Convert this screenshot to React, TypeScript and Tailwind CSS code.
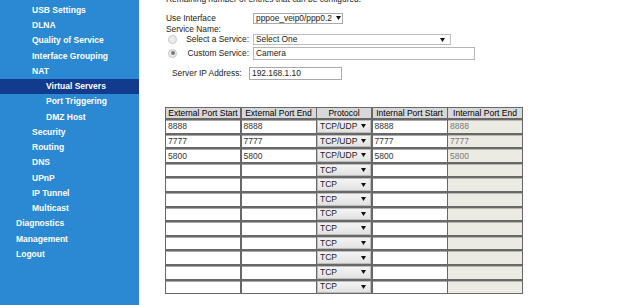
const font = { fontFamily: '"Liberation Sans", Arial, sans-serif' };

type NavItem = { label: string; level: 1 | 2 | 3; active?: boolean };

const navItems: NavItem[] = [
  { label: "USB Settings", level: 2 },
  { label: "DLNA", level: 2 },
  { label: "Quality of Service", level: 2 },
  { label: "Interface Grouping", level: 2 },
  { label: "NAT", level: 2 },
  { label: "Virtual Servers", level: 3, active: true },
  { label: "Port Triggering", level: 3 },
  { label: "DMZ Host", level: 3 },
  { label: "Security", level: 2 },
  { label: "Routing", level: 2 },
  { label: "DNS", level: 2 },
  { label: "UPnP", level: 2 },
  { label: "IP Tunnel", level: 2 },
  { label: "Multicast", level: 2 },
  { label: "Diagnostics", level: 1 },
  { label: "Management", level: 1 },
  { label: "Logout", level: 1 },
];

const indent = { 1: "pl-[16px]", 2: "pl-[32px]", 3: "pl-[46px]" };

const rows = [
  { start: "8888", end: "8888", proto: "TCP/UDP", iStart: "8888", iEnd: "8888" },
  { start: "7777", end: "7777", proto: "TCP/UDP", iStart: "7777", iEnd: "7777" },
  { start: "5800", end: "5800", proto: "TCP/UDP", iStart: "5800", iEnd: "5800" },
  ...Array.from({ length: 9 }, () => ({ start: "", end: "", proto: "TCP", iStart: "", iEnd: "" })),
];

const Arrow = () => (
  <svg width="5" height="4" viewBox="0 0 5 4" className="shrink-0">
    <path d="M0 0h5L2.5 4z" fill="#111" />
  </svg>
);

const Radio = ({ checked }: { checked?: boolean }) => (
  <span className="w-[9px] h-[9px] rounded-full border border-[#c4c4c4] bg-[#ececec] flex items-center justify-center shrink-0">
    {checked && <span className="w-[4px] h-[4px] rounded-full bg-[#7a7a7a]" />}
  </span>
);

const Sidebar = () => (
  <div className="w-[139px] shrink-0 bg-[#2b88d2] pt-[2.5px]">
    {navItems.map((item) => (
      <div
        key={item.label}
        className={`h-[15.25px] flex items-center text-[8.5px] font-bold text-white ${indent[item.level]} ${
          item.active ? "bg-[#123b8e]" : ""
        }`}
      >
        {item.label}
      </div>
    ))}
  </div>
);

const PortTable = () => (
  <div className="-ml-[1px] mt-[27.5px] w-[358px] grid grid-cols-[74px_74px_54px_74px_74px] gap-x-[1.5px] gap-y-[2px] bg-[#686868] p-[1px] text-[8.5px]">
    {["External Port Start", "External Port End", "Protocol", "Internal Port Start", "Internal Port End"].map((h) => (
      <div key={h} className="h-[10px] bg-[#d8d8d8] text-black flex items-center justify-center leading-none whitespace-nowrap overflow-hidden">
        {h}
      </div>
    ))}
    {rows.map((r, i) => (
      <div key={i} className="contents">
        <div className="h-[12.6px] bg-white border-t border-[#a8a8a8] pl-[2px] flex items-center text-[#333]">{r.start}</div>
        <div className="h-[12.6px] bg-white border-t border-[#a8a8a8] pl-[2px] flex items-center text-[#333]">{r.end}</div>
        <div className="h-[12.6px] bg-gradient-to-b from-[#f4f4f4] to-[#e2e2e2] border border-[#bdbdbd] pl-[2px] pr-[4px] flex items-center justify-between text-[#222]">
          <span>{r.proto}</span>
          <Arrow />
        </div>
        <div className="h-[12.6px] bg-white border-t border-[#a8a8a8] pl-[2px] flex items-center text-[#333]">{r.iStart}</div>
        <div className="h-[12.6px] bg-[#ebebe4] border-t border-[#b8b8b0] pl-[2px] flex items-center text-[#7a7a7a]">{r.iEnd}</div>
      </div>
    ))}
  </div>
);

export default function App() {
  return (
    <div className="w-[640px] h-[305px] overflow-hidden flex bg-white" style={font}>
      <Sidebar />
      <div className="flex-1 pl-[27px] text-[8.4px] text-[#222] overflow-hidden">
        <p className="-mt-[6px] h-[10px] leading-[10px] whitespace-nowrap">
          Remaining number of entries that can be configured:
        </p>
        <div className="mt-[8.5px] h-[11px] flex items-center">
          <span className="w-[87px]">Use Interface</span>
          <div className="w-[90px] h-[11px] border border-[#a9a9a9] bg-white flex items-center pl-[2px] gap-[4px]">
            <span>pppoe_veip0/ppp0.2</span>
            <Arrow />
          </div>
        </div>
        <div className="h-[10px] leading-[10px]">Service Name:</div>
        <div className="mt-[0.5px] h-[11px] flex items-center">
          <span className="ml-[2px]"><Radio /></span>
          <span className="w-[72px] text-right">Select a Service:</span>
          <div className="ml-[4px] w-[198px] h-[11px] border border-[#bcbcbc] bg-white flex items-center justify-between pl-[2px] pr-[5px]">
            <span>Select One</span>
            <Arrow />
          </div>
        </div>
        <div className="mt-[1.5px] h-[13px] flex items-center">
          <span className="ml-[2px]"><Radio checked /></span>
          <span className="w-[72px] text-right">Custom Service:</span>
          <div className="ml-[4px] w-[222px] h-[13px] border border-[#b4b4b4] bg-white flex items-center pl-[2px]">
            Camera
          </div>
        </div>
        <div className="mt-[7px] h-[13px] flex items-center">
          <span className="pl-[6px] w-[83px]">Server IP Address:</span>
          <div className="w-[93px] h-[13px] border border-[#a9a9a9] bg-white flex items-center pl-[2px]">
            192.168.1.10
          </div>
        </div>
        <PortTable />
      </div>
    </div>
  );
}
